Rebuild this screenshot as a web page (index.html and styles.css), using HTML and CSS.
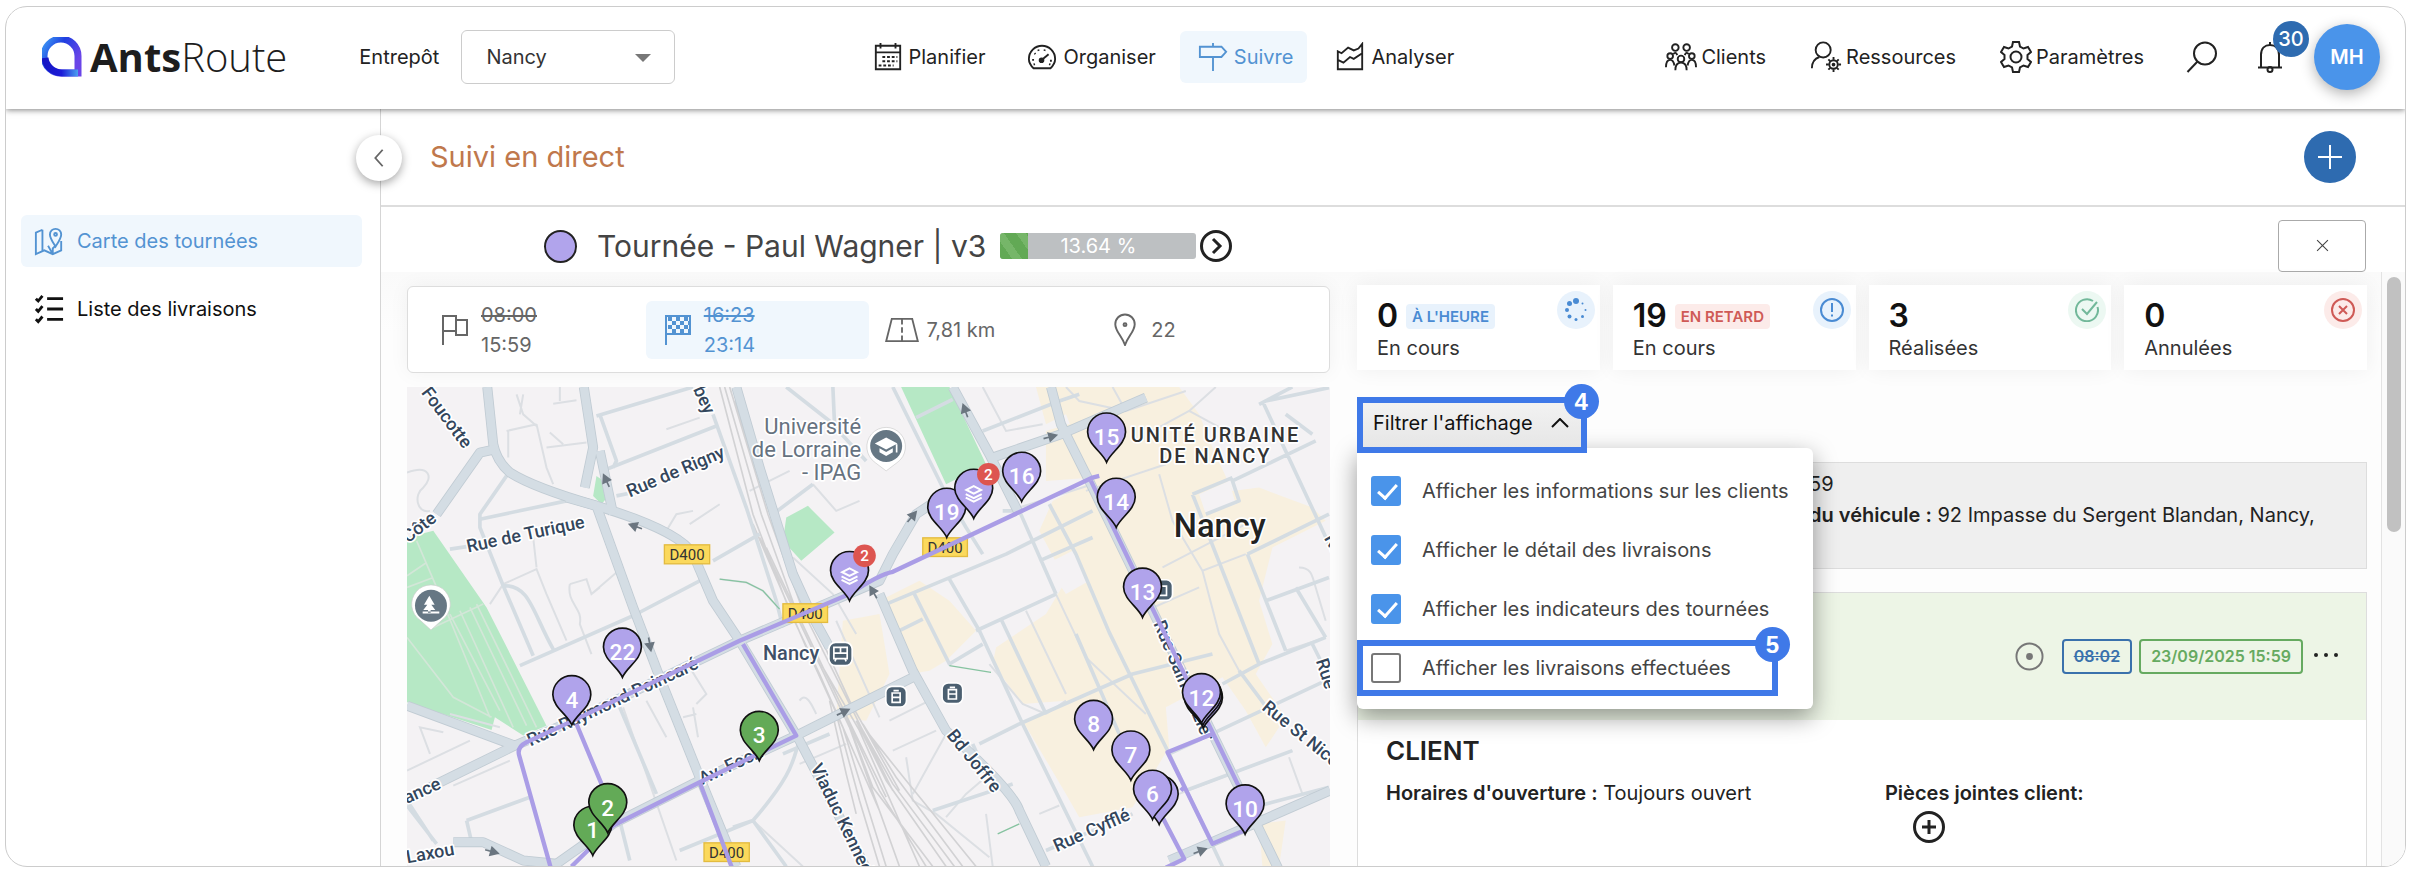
FILE: index.html
```html
<!DOCTYPE html>
<html lang="fr">
<head>
<meta charset="utf-8">
<title>AntsRoute - Suivi en direct</title>
<link rel="stylesheet" href="styles.css">
</head>
<body>
<div class="app">
  <header class="topbar">
    <div class="brand-zone">
      <a class="brand" href="#">
        <svg class="brand-mark" viewBox="0 0 40 40" aria-hidden="true">
          <defs><linearGradient id="lg" x1="0" y1="0" x2="1" y2="0.6"><stop offset="0" stop-color="#3f9cf5"/><stop offset=".45" stop-color="#1f3fe0"/><stop offset="1" stop-color="#6a45e8"/></linearGradient>
          <linearGradient id="lb" x1="0" y1="0" x2="1" y2="0"><stop offset="0" stop-color="#1616c4"/><stop offset=".5" stop-color="#1c1cd8"/><stop offset="1" stop-color="#4aa0f0"/></linearGradient></defs>
          <path d="M36 36H20A17 17 0 1 1 36 19Z" fill="none" stroke="url(#lg)" stroke-width="7"/>
          <path d="M3 21A17 17 0 0 0 20 36H36" fill="none" stroke="url(#lb)" stroke-width="7"/>
        </svg>
        <span class="brand-name"><b>Ants</b><span>Route</span></span>
      </a>
      <label class="depot-label" for="depot">Entrepôt</label>
      <span class="select-wrap"><select id="depot"><option>Nancy</option></select></span>
    </div>
    <nav class="nav">
      <a class="nav-item" href="#"><svg class="ic" viewBox="0 0 32 32"><path d="M3 4h26v25H3zM3 11h26M8 1v6M24 1v6"/><path d="M10 16h16M10 20.500h16M6 25h16" stroke-dasharray="3 2"/></svg>Planifier</a>
      <a class="nav-item" href="#"><svg class="ic" viewBox="0 0 32 32"><path d="M7 28C4 25 2 22 2 18a14 14 0 0 1 28 0c0 4-2 7-5 10z"/><path d="M16 19l7-6"/><circle cx="15.500" cy="19.500" r="2" fill="currentColor"/><path d="M5.500 19h2M8 12l1 1M12 8l.5 1.500M19 8l-.5 1.500M24.500 20h2M7 24l1.500-.5M25 24l-1.500-.5" /></svg>Organiser</a>
      <a class="nav-item active" href="#"><svg class="ic" viewBox="0 0 32 32"><path d="M16 1v4M16 16v15M2 5h23l5 5.500-5 5.500H2z"/></svg>Suivre</a>
      <a class="nav-item" href="#"><svg class="ic" viewBox="0 0 32 32"><path d="M3 10l4 2 7-6 6 3 5-2 4-5v27H3zM3 19l6 3 7-6 4 2 9-6"/></svg>Analyser</a>
    </nav>
    <div class="tools">
      <a class="nav-item tight" href="#"><svg class="ic big" viewBox="0 0 34 30"><g><circle cx="11" cy="5" r="3.500"/><circle cx="23" cy="5" r="3.500"/><circle cx="5.500" cy="14" r="3"/><circle cx="28.500" cy="14" r="3"/><circle cx="17" cy="17" r="3.500"/><path d="M1 26c0-5 1-8 4.500-8s4 3 4.500 6M33 26c0-5-1-8-4.500-8s-4 3-4.500 6M11 29c0-5 2-8 6-8s6 3 6 8M9 12c1-2 3-2 4 1M25 12c-1-2-3-2-4 1"/></g></svg>Clients</a>
      <a class="nav-item tight" href="#"><svg class="ic big" viewBox="0 0 32 34"><circle cx="13" cy="9.500" r="8"/><path d="M1 29c0-6 2-10 8-12"/><circle cx="24" cy="25" r="4.500"/><circle cx="24" cy="25" r="1"/><path d="M24 17v3M24 30v3M16 25h3M29 25h3M18.500 19.500l2 2M27.500 28.500l2 2M29.500 19.500l-2 2M20.500 28.500l-2 2"/></svg>Ressources</a>
      <a class="nav-item tight" href="#"><svg class="ic big" viewBox="0 0 32 32"><path d="M13 1h6l1 4.500 3.500 2 4.500-1.500 3 5-3.500 3v4l3.500 3-3 5-4.500-1.500-3.500 2L19 31h-6l-1-4.500-3.500-2L4 26l-3-5 3.500-3v-4L1 11l3-5 4.500 1.500 3.500-2z"/><circle cx="16" cy="16" r="5.500"/></svg>Paramètres</a>
      <button class="icon-btn" aria-label="Rechercher"><svg class="ic big" viewBox="0 0 32 32"><circle cx="19" cy="12.500" r="11"/><path d="M11.500 20.500L1.500 31"/></svg></button>
      <button class="icon-btn bell" aria-label="Notifications"><svg class="ic big" viewBox="0 0 32 32"><path d="M4 26.500h24M7 26V14C7 7 11 4 16 4s9 3 9 10v12M16 4V1"/><circle cx="16" cy="28.500" r="2.500"/></svg><span class="count">30</span></button>
      <button class="avatar">MH</button>
    </div>
  </header>

  <div class="body">
    <aside class="side">
      <a class="side-item active" href="#"><svg class="ic" viewBox="0 0 32 32"><path d="M9 4L2 7v23l9-4 9 4 9-4V16M9 4v22M15 21l5 9M20 29v-5l3-3"/><path d="M23 22c-3-5-6-9-6-13a6 6 0 0 1 12 0c0 4-3 8-6 13z"/><circle cx="23" cy="9" r="1.500"/></svg>Carte des tournées</a>
      <a class="side-item" href="#"><svg class="ic bold" viewBox="0 0 32 32"><path d="M14 5h17M14 16h17M14 27h17M2 5l2.500 2.500L9 2M2 16l2.500 2.500L9 13M2 27l2.500 2.500L9 24"/></svg>Liste des livraisons</a>
    </aside>
    <main class="main">
      <button class="collapse" aria-label="Replier le menu"><svg viewBox="0 0 24 24"><path d="M16 3l-8 9 8 9"/></svg></button>
      <div class="subhead"><h1>Suivi en direct</h1><button class="add" aria-label="Ajouter"><svg viewBox="0 0 24 24"><path d="M12 0v24M0 12h24"/></svg></button></div>
      <div class="tour-head">
        <span class="tour-dot"></span><h2>Tournée - Paul Wagner | v3</h2>
        <div class="progress"><span class="bar"></span><span class="pct">13.64 %</span></div>
        <button class="next" aria-label="Tournée suivante"><svg viewBox="0 0 32 32"><circle cx="16" cy="16" r="14.500"/><path d="M13 9l7 7-7 7"/></svg></button>
        <button class="close" aria-label="Fermer"><svg viewBox="0 0 12 12"><path d="M1 1l10 10M11 1L1 11"/></svg></button>
      </div>
      <div class="work">
        <section class="left">
          <div class="summary">
            <div class="sum"><svg class="sic" viewBox="0 0 28 30"><path d="M2 30V1h13v15H2M15 5h11v15H15v-4"/></svg><div class="times"><s>08:00</s><span>15:59</span></div></div>
            <div class="sum active"><svg class="sic" viewBox="0 0 28 30"><path d="M2 30V1h24v18H2"/><path d="M4 4h22M4 12h22" stroke-dasharray="4 4" stroke-width="4"/><path d="M8 8h18M8 16h18" stroke-dasharray="4 4" stroke-width="4"/></svg><div class="times"><s>16:23</s><span>23:14</span></div></div>
            <div class="sum road"><svg class="sic" viewBox="0 0 38 28"><path d="M8 2h22l6 24H2z"/><path d="M19 2v24" stroke-dasharray="6 3"/></svg><span>7,81 km</span></div>
            <div class="sum pinned"><svg class="sic" viewBox="0 0 24 34"><path d="M12 33C9 24 2 19 2 11.500a10 10 0 0 1 20 0C22 19 15 24 12 33z"/><circle cx="12" cy="12" r="1.500"/></svg><span>22</span></div>
          </div>
          <svg class="map" viewBox="21 18 2772 1440" preserveAspectRatio="xMinYMin slice" role="img" aria-label="Carte de la tournée">
            <defs>
              <path id="pin" d="M0 0C-12-30-57-54-57-91A57 57 0 1 1 57-91C57-54 12-30 0 0Z"/>
              <path id="arw" d="M-20 0H8M-2-12L20 0-2 12Z"/>
              <g id="stack"><path d="M-22-86L0-97 22-86 0-75Z" fill="none" stroke="#fff" stroke-width="6"/><path d="M-24-73L0-61 24-73M-24-63L0-51 24-63" fill="none" stroke="#fff" stroke-width="6"/></g>
            </defs>
            <rect x="21" y="18" width="2772" height="1440" class="land"/>
            <path class="park" d="M21 470L100 450 260 680 440 1035 370 1065 285 1010 275 1048 21 965Z"/>
            <path class="park" d="M1160 410L1225 375 1305 455 1205 540 1150 480ZM590 285L612 300 622 350 605 370 580 345ZM1505 18H1650L1760 250 1640 310Z"/>
            <path class="parkline" d="M21 585L80 545M21 620L100 590M50 480L110 620 180 790 270 1010M21 770L160 950 275 1010M150 700L300 990M180 690L340 1040M210 680L380 1035M100 740L250 670M230 670L410 1040"/>
            <g transform="translate(1440 0)">
              <path class="shop" d="M470 18H900L960 100 1000 200 1060 330 1140 320 1300 380 1340 420 1180 500 1140 660 1180 790 1130 880 1220 1010 1160 1100 1100 990 1030 890 860 980 870 1100 760 1280 600 1310 560 1240 430 1020 500 1000 560 960 430 970 340 850 350 800 500 700 560 600 480 450 520 360 640 300 560 100 500 130Z"/>
              <path class="shop" d="M0 660L120 600 210 660 290 750 200 840 150 870 90 880ZM-110 720L0 700 30 880-40 1020-130 1010ZM500 150L600 120 640 290 500 300ZM1140 1330L1220 1320 1200 1458H1150Z"/>
              <path class="land" d="M290 590L410 530 520 640 410 700 290 745ZM500 550L580 510 630 600 560 640ZM960 340L1050 300 1070 370 980 400Z"/>
            </g>
            <g class="tiny">
              <path d="M350 40L370 100 410 135M320 150L410 130M370 40L360 100M325 150L325 230M410 130L440 260 460 310M440 200L560 185M450 155L490 190M480 18V60M460 68L530 58M800 145L900 110M1050 330L1170 270M21 275C90 250 100 290 70 320C40 340 50 400 90 390M800 450L830 400 880 390M870 430L960 370M270 670L310 610 410 565 440 640 500 780M510 610L560 595 575 640 600 620M510 610C500 670 550 680 540 730L575 820M575 640L650 575M410 560L400 470M960 595L1040 605 1090 630 1140 685M870 860L920 940 890 970M850 1010L890 1000M880 980L895 1070M740 960L800 1070M670 980L740 1180 830 1440M21 1170L210 1080M160 1215L330 1140M90 1120L60 1040 130 1055M300 1040L150 1000M1200 960C1220 930 1240 980 1250 1000M1060 1320L1210 1458M1240 310L1310 390 1380 360M1180 530L1300 640 1370 760M1310 720L1440 1010M1340 1090L1200 1150"/>
              <path transform="translate(1440 0)" d="M310 18L380 150 490 130M560 18L600 60 740 90M700 18L740 90 920 30M820 150L930 90 1060 160M930 90L1010 18M620 330L860 250M840 280L880 420 970 570 1100 520M970 570L1020 760 1080 870M850 560L1100 430M800 690L960 620M420 380L640 310M530 640L620 830 800 1000M440 690L560 940M330 850L430 970 500 1000M560 960L500 1000M30 1020L150 960 200 1050M40 1110L170 1050M80 1130L100 1260 170 1300 330 1430M200 1310L260 1240 330 1180M320 1300L340 1458M480 1300L540 1275M100 1240L200 1060M1220 810L1340 770M1260 560C1300 560 1300 590 1310 620L1340 720M900 1240L1240 1110M1230 1130L1270 1240"/>
            </g>
            <g class="rails">
              <path d="M960 18L1060 400 1170 690 1260 880 1440 1290M975 18L1085 400 1190 690 1280 880 1460 1250M990 18L1105 400 1210 690 1300 870 1480 1230M1005 60L1140 480 1240 720 1350 960 1500 1230M1060 430L1220 800 1330 1040 1460 1458M1080 470L1250 830 1350 1040 1500 1458M1100 500L1270 860 1380 1050 1560 1458M1310 1000L1380 1260 1440 1458M1340 1010L1420 1220 1600 1458M1370 1020L1460 1200 1640 1458M1390 1030L1490 1190 1690 1458M1400 1050L1520 1200 1730 1458M1290 960L1340 1180 1370 1300M1350 1030L1440 1230 1580 1458M1385 1040L1480 1210 1665 1458"/>
            </g>
            <g class="minor">
              <path d="M21 1260L100 1380M600 100L650 240 640 260M590 105L880 18M620 265L950 135M940 100L1040 380 1130 660 1150 740M320 285L240 400 240 440 310 615M240 415L500 360M150 505L250 490M310 615C390 610 400 700 460 805M310 615L400 825M360 855L700 705 900 600M940 540L1080 460M650 345L700 335M1120 400L1240 310M660 980L770 1240M1290 1060L1150 1120M1000 1340L1060 1320C1190 1170 1180 1130 1200 1080M840 1410L1060 1320 1160 1458M21 1275L110 1390M200 1320L390 1250M200 1320L215 1385M660 1320L690 1440M1160 18L1290 120 1400 240M1300 18L1305 130"/>
              <path transform="translate(1440 0)" d="M40 18L190 320 260 440 310 520M20 670L380 520 640 390M105 640L210 850 310 790M210 595L300 750 430 1030 640 1458M60 750L130 715M290 750L530 640M365 715L500 1000M510 370L590 520 690 755 800 980 870 1120 1030 1458M370 390L420 390 530 640M590 760L720 1060M480 540L640 470M310 150L540 60 600 40M110 110L220 55M940 340L1140 850M940 340L1060 290M980 400L1080 360 1060 300 1310 180M1150 60L1350 490M1140 70L1240 18M1220 100L1300 160M1160 60L1350 20M1105 520L1220 810M1105 520L1350 400M1160 660L1350 590M1250 620L1340 770M420 1030L760 880 1000 820M1030 910L1140 850 1340 770M870 1120L1340 900M1080 870L1170 990M200 1040L320 1180M300 1090L420 1030M500 1410L760 1300M920 1230L1240 1110M1050 1300L1350 1220M320 1180L280 1090M160 1290L400 1210M1300 790L1330 850M-20 960L90 890"/>
            </g>
            <g class="road-o" fill="none"><use href="#majors"/></g>
            <g class="road-i" fill="none">
              <g id="majors">
                <path d="M262 18L280 190Q290 240 330 275Q400 320 590 375Q840 450 880 520L940 660 1020 780 1200 1080 1440 1540"/>
                <path d="M552 18L580 200 555 320M600 210L640 400M590 375L700 680 780 890 900 1190 1010 1458"/>
                <path d="M1010 18L1080 260 1180 580 1235 700 1290 800"/>
                <path d="M21 975L345 1095 110 1210 21 1260M345 1095L520 1020 1020 780 1440 600 1480 520 1550 400 1610 360"/>
                <path d="M160 1385L250 1385 370 1440 470 1450 640 1330 900 1200 1190 1065 1440 940 1540 890"/>
                <path d="M110 400L240 215 285 205M590 375L500 350"/>
                <path d="M1440 640L1540 870 1640 1050Q1840 1230 1860 1290L1940 1458M1660 18L1770 220 1860 400M1955 18L1985 130 2070 300 2650 1490M1780 230L1985 160 2240 50M2310 1440L2450 1380 2793 1230"/>
              </g>
            </g>
            <path class="green-line" d="M960 595L1040 605 1090 630 1140 685M1650 855L1775 875M1795 1360L1860 1330"/>
            <g class="arrows"><use href="#arw" transform="translate(620 300) rotate(-115)"/><use href="#arw" transform="translate(708 437) rotate(200)"/><use href="#arw" transform="translate(750 790) rotate(80)"/><use href="#arw" transform="translate(1330 995) rotate(-25)"/><use href="#arw" transform="translate(275 1413) rotate(15)"/><use href="#arw" transform="translate(1698 90) rotate(-110)"/><use href="#arw" transform="translate(1952 168) rotate(-15)"/><use href="#arw" transform="translate(1537 408) rotate(-50)"/><use href="#arw" transform="translate(2402 1412) rotate(-20)"/><use href="#arw" transform="translate(1422 635) rotate(-120)"/></g>
            <g class="shield"><rect x="794" y="492" width="136" height="57"/><rect x="1150" y="669" width="134" height="56"/><rect x="1570" y="471" width="134" height="56"/><rect x="913" y="1387" width="136" height="56"/></g>
            <g class="shield-t"><text x="862" y="538">D400</text><text x="1217" y="715">D400</text><text x="1637" y="517">D400</text><text x="981" y="1433">D400</text></g>
            <g class="street">
              <text transform="translate(62 35) rotate(53)">Foucotte</text>
              <text transform="translate(24 488) rotate(-38)">Côte</text>
              <text transform="translate(204 515) rotate(-12)">Rue de Turique</text>
              <text transform="translate(690 350) rotate(-23)">Rue de Rigny</text>
              <text transform="translate(880 25) rotate(66)">bey</text>
              <text transform="translate(392 1098) rotate(-25)">Rue Raymond Poincaré</text>
              <text transform="translate(908 1213) rotate(-25)">Av. Foch</text>
              <text transform="translate(20 1270) rotate(-24)">ance</text>
              <text transform="translate(22 1448) rotate(-10)">Laxou</text>
              <text transform="translate(1232 1160) rotate(64)">Viaduc Kennedy</text>
              <text transform="translate(1640 1065) rotate(51)">Bd Joffre</text>
              <text transform="translate(1972 1415) rotate(-24)">Rue Cyfflé</text>
              <text transform="translate(2262 728) rotate(67)">Rue Saint-Dizier</text>
              <text transform="translate(2586 985) rotate(39)">Rue St Nicolas</text>
              <text transform="translate(2750 840) rotate(72)">Rue</text>
              <text transform="translate(2774 472) rotate(60)">Rue</text>
            </g>
            <g class="poi"><text x="1385" y="160">Université</text><text x="1385" y="228">de Lorraine</text><text x="1385" y="297">- IPAG</text></g>
            <text class="station" x="1090" y="838">Nancy</text>
            <g class="area"><text x="2449" y="182">UNITÉ URBAINE</text><text x="2449" y="246">DE NANCY</text></g>
            <text class="city" x="2462" y="470">Nancy</text>
            <g class="tram">
              <rect x="1288" y="785" width="70" height="70" rx="20"/><rect x="1459" y="917" width="62" height="62" rx="18"/><rect x="1628" y="907" width="62" height="62" rx="18"/><rect x="2258" y="597" width="62" height="62" rx="18"/>
              <path d="M1303 800h40v34h-40zM1303 817h40M1323 800v17M1310 834l-4 8M1336 834l4 8"/><path d="M1478 937h24v28h-24zM1482 930h16M1478 950h24M1647 927h24v28h-24zM1651 920h16M1647 940h24M2280 616h22v28h-22z"/>
            </g>
            <g class="poi-pin"><path d="M93 748L60 718A58 58 0 1 1 126 718Z"/><circle cx="93" cy="675" r="48"/><path class="glyph" d="M88 645L72 672h10l-12 16h14v8h8v-8h14l-12-16h10zM68 692h50v6H68z"/>
            <path d="M1460 270L1427 245A58 58 0 1 1 1493 245Z"/><circle cx="1460" cy="195" r="48"/><path class="glyph" d="M1426 188l34-18 34 18-34 18zM1440 202v12l20 11 20-11v-12l-20 11zM1489 190h5v25h-5z"/></g>
            <path class="route" d="M2100 285L2080 290 1480 573Q1440 580 1350 640L1020 780 520 1020 380 1085Q350 1100 358 1125L455 1470M1030 790L1190 1065 900 1205 640 1335 515 1458M900 1205L1000 1470M530 1030L605 1210M2075 300L2200 560 2530 1240M2440 1060L2305 1115 2440 1390 2535 1350M2290 1310L2355 1435 2300 1462M2345 1230L2355 1220"/>
            <g class="pins">
              <use href="#pin" x="668" y="890"/><use href="#pin" x="516" y="1033"/><use href="#pin" class="done" x="1079" y="1140"/><use href="#pin" class="done" x="579" y="1425"/>
              <text x="668" y="838">22</text><text x="516" y="981">4</text><text x="1079" y="1088">3</text><text x="579" y="1373">1</text>
              <use href="#pin" class="done" x="624" y="1357"/><text x="624" y="1305">2</text>
              <use href="#pin" x="1350" y="660"/><use href="#stack" x="1350" y="660"/>
              <g transform="translate(1440 0)">
                <use href="#pin" x="682" y="244"/><text x="682" y="192">15</text>
                <use href="#pin" x="427" y="362"/><text x="427" y="310">16</text>
                <use href="#pin" x="202" y="470"/><text x="202" y="418">19</text>
                <use href="#pin" x="283" y="413"/><use href="#stack" x="283" y="413"/>
                <use href="#pin" x="711" y="440"/><text x="711" y="388">14</text>
                <use href="#pin" x="790" y="710"/><text x="790" y="658">13</text>
                <use href="#pin" x="973" y="1042"/><use href="#pin" x="971" y="1034"/><use href="#pin" x="967" y="1027"/><text x="967" y="976">12</text>
                <use href="#pin" x="643" y="1107"/><text x="643" y="1055">8</text>
                <use href="#pin" x="755" y="1199"/><text x="755" y="1147">7</text>
                <use href="#pin" x="840" y="1332"/><use href="#pin" x="820" y="1317"/><text x="820" y="1265">6</text>
                <use href="#pin" x="1098" y="1361"/><text x="1098" y="1309">10</text>
              </g>
            </g>
            <g class="multi"><circle cx="1395" cy="525" r="34"/><text x="1395" y="541">2</text><circle cx="1767" cy="280" r="34"/><text x="1767" y="296">2</text></g>
          </svg>
        </section>

        <section class="right">
          <div class="stats">
            <div class="stat"><div class="num">0<span class="tag blue">À L'HEURE</span></div><div>En cours</div><span class="dot blue"><svg viewBox="0 0 24 24"><g fill="currentColor" stroke="none"><circle cx="12" cy="3" r="3"/><circle cx="5.500" cy="5.500" r="2.500"/><circle cx="3" cy="12" r="2"/><circle cx="5.500" cy="18.500" r="2"/><circle cx="12" cy="21.500" r="1.500"/><circle cx="18.500" cy="18.500" r="1.500"/><circle cx="21.500" cy="12" r="1"/><circle cx="18.500" cy="5.500" r="1"/></g></svg></span></div>
            <div class="stat"><div class="num">19<span class="tag red">EN RETARD</span></div><div>En cours</div><span class="dot blue"><svg viewBox="0 0 24 24"><circle cx="12" cy="12" r="11"/><path d="M12 5v9M12 16.500v2"/></svg></span></div>
            <div class="stat"><div class="num">3</div><div>Réalisées</div><span class="dot green"><svg viewBox="0 0 24 24"><path d="M18 3A11 11 0 1 0 22.500 9M7 11l5 5L22 4"/></svg></span></div>
            <div class="stat"><div class="num">0</div><div>Annulées</div><span class="dot red"><svg viewBox="0 0 24 24"><circle cx="12" cy="12" r="11"/><path d="M8 8l8 8M16 8l-8 8"/></svg></span></div>
          </div>
          <div class="filter">
            <button class="filter-btn">Filtrer l'affichage<svg viewBox="0 0 18 10"><path d="M1 9l8-8 8 8"/></svg><span class="step">4</span></button>
            <div class="menu">
              <label class="opt"><input type="checkbox" checked>Afficher les informations sur les clients</label>
              <label class="opt"><input type="checkbox" checked>Afficher le détail des livraisons</label>
              <label class="opt"><input type="checkbox" checked>Afficher les indicateurs des tournées</label>
              <label class="opt marked"><input type="checkbox">Afficher les livraisons effectuées<span class="step">5</span></label>
            </div>
          </div>
          <div class="info"><div>59</div><div><b>du véhicule :</b> 92 Impasse du Sergent Blandan, Nancy,</div></div>
          <article class="visit">
            <div class="visit-head">
              <svg class="target" viewBox="0 0 30 30"><circle cx="15" cy="15" r="13.500"/><circle cx="15" cy="15" r="3.500" class="fill"/></svg>
              <s class="chip blue">08:02</s><span class="chip green">23/09/2025 15:59</span>
              <button class="more" aria-label="Plus d'actions"><svg viewBox="0 0 24 6"><circle cx="2" cy="3" r="2"/><circle cx="12" cy="3" r="2"/><circle cx="22" cy="3" r="2"/></svg></button>
            </div>
            <div class="visit-body">
              <h3>CLIENT</h3>
              <div class="cols">
                <p><b>Horaires d'ouverture :</b> Toujours ouvert</p>
                <div><b>Pièces jointes client:</b><button class="attach" aria-label="Ajouter une pièce jointe"><svg viewBox="0 0 32 32"><circle cx="16" cy="16" r="14.500"/><path d="M16 9v14M9 16h14"/></svg></button></div>
              </div>
            </div>
          </article>
        </section>
        <div class="track"><div class="thumb"></div></div>
      </div>
    </main>
  </div>
</div>
</body>
</html>
```

FILE: styles.css
```css
* { box-sizing: border-box; }
body { margin: 0; background: #fff; color: #222; font: 400 20px/28px Inter, "Noto Sans", sans-serif; }
a { color: inherit; text-decoration: none; }
button { font: inherit; color: inherit; padding: 0; border: 0; background: none; }
h1, h2, h3, p { margin: 0; font-weight: 400; }
b { font-weight: 600; }
svg { display: block; fill: none; stroke: currentColor; stroke-width: 2; flex: none; }
.app { display: flex; flex-direction: column; height: calc(100vh - 11px); margin: 6px 4px 5px 5px; border: 1px solid #ccc; border-radius: 22px; overflow: hidden; }

.topbar { position: relative; z-index: 3; display: flex; align-items: center; justify-content: space-between; height: 102px; padding: 0 25px 2px 36px; background: #fff; box-shadow: 0 1px 6px rgba(0, 0, 0, .5); flex: none; }
.brand-zone, .brand, .nav, .tools, .nav-item { display: flex; align-items: center; }
.brand { gap: 8px; margin-right: 72px; color: #1d1d1d; }
.brand-mark { width: 40px; height: 40px; }
.brand-name { font: 300 40px/48px "Open Sans", "Noto Sans", sans-serif; }
.brand-name b { font-weight: 700; }
.depot-label { margin-right: 22px; }
.select-wrap { position: relative; }
.select-wrap::after { content: ""; position: absolute; right: 24px; top: 24px; border: 8px solid transparent; border-top-color: #777; border-bottom: 0; pointer-events: none; }
select { appearance: none; width: 214px; height: 54px; padding: 0 24px; border: 1px solid #ccc; border-radius: 6px; background: #fff; color: #333; font: inherit; }
.nav { gap: 10px; }
.tools { gap: 8px; }
.nav-item { gap: 6px; height: 52px; padding: 0 14px 0 18px; border-radius: 6px; }
.nav-item.tight { gap: 4px; padding-right: 18px; }
.ic { width: 30px; height: 30px; }
.ic.big { width: 32px; height: 32px; }
.nav-item.active, .side-item.active, .sum.active { background: #f0f7fd; color: #5393d2; }
.icon-btn { position: relative; width: 64px; display: grid; place-items: center; }
.icon-btn.bell { width: 56px; margin-right: 8px; }
.count { position: absolute; left: 31px; top: -20px; width: 36px; height: 36px; border-radius: 50%; background: #2e6bb0; color: #fff; font-weight: 500; line-height: 36px; }
.avatar { width: 66px; height: 66px; border-radius: 50%; background: #4a94ea; color: #fff; font-weight: 600; box-shadow: 0 4px 14px rgba(0, 0, 0, .3); }

.body { display: flex; flex: 1; min-height: 0; }
.side { width: 375px; flex: none; padding: 106px 18px 0 15px; border-right: 1px solid #d5d5d5; display: flex; flex-direction: column; gap: 16px; }
.side-item { display: flex; align-items: center; gap: 13px; height: 52px; padding-left: 13px; border-radius: 6px; color: #111; }
.bold { stroke-width: 3; }
.main { position: relative; flex: 1; min-width: 0; display: flex; flex-direction: column; }
.collapse { position: absolute; left: -25px; top: 26px; width: 46px; height: 46px; border-radius: 50%; background: #fff; box-shadow: 0 3px 10px rgba(0, 0, 0, .35); display: grid; place-items: center; color: #666; }
.collapse svg { width: 22px; height: 22px; }
.subhead { display: flex; align-items: center; justify-content: space-between; height: 98px; padding: 0 49px; border-bottom: 2px solid #ddd; flex: none; }
h1 { font-size: 29px; line-height: 36px; color: #c0784c; }
.add { width: 52px; height: 52px; border-radius: 50%; background: #2e6bb0; color: #fff; display: grid; place-items: center; }
.add svg { width: 24px; height: 24px; }
.tour-head { display: flex; align-items: center; height: 65px; padding: 13px 39px 0 163px; flex: none; }
.tour-dot { width: 33px; height: 33px; border: 2px solid #222; border-radius: 50%; background: #b1a4ec; }
h2 { margin: 0 14px 0 20px; font-size: 30px; line-height: 36px; color: #444; }
.progress { position: relative; width: 196px; height: 26px; border-radius: 3px; background: #bdc0c2; overflow: hidden; color: #fff; text-align: center; line-height: 26px; }
.bar { position: absolute; left: 0; top: 0; width: 14%; height: 100%; background: repeating-linear-gradient(55deg, #62a955 0 10px, #76b669 10px 18px); }
.pct { position: relative; }
.next { margin-left: 4px; }
.next svg { width: 32px; height: 32px; stroke-width: 3; }
.close { margin: 0 0 1px auto; width: 88px; height: 52px; border: 1px solid #aaa; border-radius: 4px; background: #fff; display: grid; place-items: center; color: #444; }
.close svg { width: 13px; height: 13px; stroke-width: 1; }

.work { flex: 1; min-height: 0; display: grid; grid-template-columns: 923fr 1051fr 24px; padding-left: 26px; background: linear-gradient(#fafafa, #fdfdfd 60px); }
.left { padding-top: 14px; display: flex; flex-direction: column; gap: 14px; min-height: 0; min-width: 0; }
.summary { display: grid; grid-template-columns: repeat(4, 1fr); align-items: center; height: 87px; padding: 0 15px; border: 1px solid #ddd; border-radius: 6px; background: #fff; color: #666; box-shadow: 0 0 20px rgba(0, 0, 0, .05); flex: none; }
.sum { display: flex; align-items: center; gap: 12px; height: 58px; padding-left: 18px; border-radius: 6px; }
.sic { width: 28px; height: 30px; }
.sum.road { padding-left: 14px; gap: 6px; }
.road .sic { width: 38px; height: 26px; }
.sum.pinned { padding-left: 22px; gap: 14px; }
.pinned .sic { width: 24px; height: 33px; }
.times { display: flex; flex-direction: column; line-height: 30px; }
.map { width: 100%; flex: 1; min-height: 0; }

.right { margin: 0 14px 0 27px; padding-top: 13px; min-width: 0; display: flex; flex-direction: column; }
.stats { display: grid; grid-template-columns: repeat(4, 1fr); gap: 13px; }
.stat { position: relative; height: 85px; padding: 11px 20px; background: #fff; box-shadow: 0 0 20px rgba(0, 0, 0, .06); color: #333; }
.num { display: flex; align-items: center; gap: 8px; height: 40px; font-size: 32px; font-weight: 600; color: #111; }
.stat > div + div { line-height: 24px; }
.tag { height: 25px; padding: 0 6px; border-radius: 4px; font-size: 15px; line-height: 25px; }
.tag.blue, .dot.blue { background: #e8f2fc; color: #4a8bd3; }
.tag.red, .dot.red { background: #fcebe9; color: #cf5a56; }
.dot.green { background: #ecf8f2; color: #72b89a; }
.dot { position: absolute; right: 5px; top: 6px; width: 38px; height: 38px; border-radius: 50%; display: grid; place-items: center; }
.dot svg { width: 24px; height: 24px; }
.filter { position: relative; z-index: 2; margin-top: 27px; }
.filter-btn { position: relative; z-index: 1; display: flex; align-items: center; gap: 18px; height: 56px; padding: 0 12px 4px 10px; border: 6px solid #3f79e8; background: linear-gradient(#f2f2f2, #e6e6e6); color: #111; }
.filter-btn svg { width: 18px; height: 10px; }
.step { position: absolute; right: -18px; top: -19px; width: 35px; height: 35px; border-radius: 50%; background: #3f79e8; color: #fff; font: 700 24px/35px "Liberation Sans", Arial, sans-serif; text-align: center; }
.menu { position: absolute; left: 0; top: 51px; width: 456px; padding: 13px 0; border-radius: 6px; background: #fff; box-shadow: 0 8px 24px rgba(0, 0, 0, .4); }
.opt { position: relative; display: flex; align-items: center; gap: 21px; height: 59px; padding-left: 14px; color: #444; white-space: nowrap; }
.opt.marked { width: 421px; height: 56px; margin-top: 2px; padding-left: 8px; border: 6px solid #3f79e8; }
.opt input { appearance: none; position: relative; width: 30px; height: 30px; margin: 0; border: 2px solid #777; border-radius: 3px; background: #fff; flex: none; }
.opt input:checked { border-color: #4a94ea; background: #4a94ea; }
.opt input:checked::after { content: ""; position: absolute; left: 9px; top: 2px; width: 8px; height: 16px; border: solid #fff; border-width: 0 3px 3px 0; transform: rotate(42deg); }
.info { height: 107px; margin-top: 9px; padding: 6px 0 0 451px; border: 1px solid #ddd; background: #efefef; line-height: 31px; white-space: nowrap; }
.visit { flex: 1; margin-top: 23px; border: 1px solid #ddd; border-bottom: 0; background: #fff; min-height: 0; }
.visit-head { display: flex; align-items: center; justify-content: flex-end; height: 127px; padding-right: 28px; background: #edf5e6; }
.target { width: 29px; height: 29px; margin-right: 18px; color: #777; }
.fill { fill: currentColor; stroke: none; }
.chip { height: 35px; padding: 0 10px; margin-right: 7px; border: 2px solid; border-radius: 4px; font-size: 16px; font-weight: 600; line-height: 31px; }
.chip.blue { color: #3a71ac; }
.chip.green { color: #66aa60; }
.more { margin: 0 0 4px 4px; color: #222; }
.more svg { width: 24px; height: 6px; fill: currentColor; stroke: none; }
.visit-body { padding: 14px 28px; }
h3 { font-size: 26px; line-height: 34px; font-weight: 600; }
.cols { display: grid; grid-template-columns: 500fr 454fr; margin-top: 11px; }
.attach { display: block; margin: 4px 0 0 28px; }
.attach svg { width: 32px; height: 32px; stroke-width: 3; }
.track { border-left: 1px solid #e3e3e3; background: #fafafa; padding-top: 5px; }
.thumb { width: 14px; height: 255px; margin: 0 auto; border-radius: 7px; background: #c1c1c1; }

.land { fill: #f4f2f4; stroke: none; }
.park { fill: #b6e8c5; stroke: none; }
.parkline { stroke: #d3e6d8; stroke-width: 5; }
.shop { fill: #f8f0df; stroke: none; }
.tiny { stroke: #dcdfe3; stroke-width: 6; }
.rails { stroke: #d2d2d4; stroke-width: 5; }
.minor { stroke: #d4dce2; stroke-width: 11; stroke-linejoin: round; }
.road-o { stroke: #c0cbd3; stroke-width: 30; stroke-linejoin: round; }
.road-i { stroke: #d4dde4; stroke-width: 25; stroke-linejoin: round; }
.green-line { stroke: #86c3a0; stroke-width: 4; }
.arrows { color: #6b7680; fill: #6b7680; stroke-width: 5; }
.shield { fill: #fbd95c; stroke: #e3bb3f; stroke-width: 4; }
.map text { font-family: Roboto, sans-serif; stroke: #fff; stroke-width: 10; paint-order: stroke; stroke-linejoin: round; }
.map .shield-t text { font-size: 45px; fill: #333; stroke: none; text-anchor: middle; }
.map .street text { font-size: 54px; font-weight: 500; fill: #33465c; }
.map .poi text { font-size: 66px; fill: #66727f; text-anchor: end; }
.map .station { font-size: 60px; font-weight: 500; fill: #3f5068; }
.map .area text { font-size: 60px; font-weight: 500; fill: #333; text-anchor: middle; letter-spacing: 6px; }
.map .city { font-size: 98px; font-weight: 500; fill: #222; text-anchor: middle; }
.tram { stroke: #fff; stroke-width: 5; }
.tram rect { fill: #4b5f70; }
.poi-pin { fill: #fff; stroke: #ccc; stroke-width: 2; }
.poi-pin circle { fill: #667784; stroke: none; }
.poi-pin .glyph { fill: #fff; stroke: none; }
.route { stroke: #aa9de6; stroke-width: 13; stroke-linejoin: round; }
.pins { fill: #b0a3eb; stroke: #111; stroke-width: 5; }
.pins .done { fill: #63aa57; }
.map .pins text { font: 500 68px Roboto, sans-serif; fill: #fff; stroke: none; text-anchor: middle; }
.multi { fill: #dd5550; stroke: none; }
.map .multi text { font-size: 46px; font-weight: 500; fill: #fff; stroke: none; text-anchor: middle; }
```
